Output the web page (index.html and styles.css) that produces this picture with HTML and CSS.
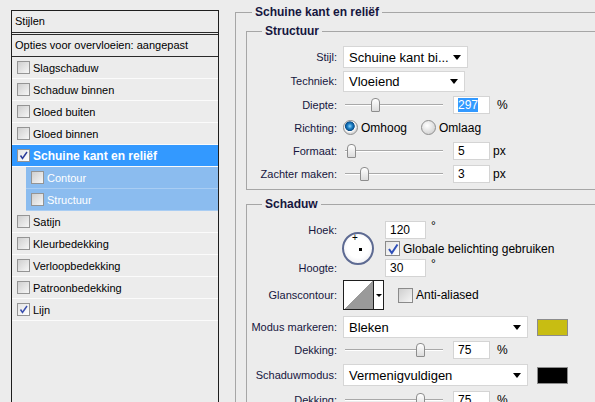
FILE: index.html
```html
<!DOCTYPE html>
<html lang="nl">
<head>
    <meta charset="UTF-8">
    <title>Laagstijl</title>
    <link rel="stylesheet" href="styles.css">
</head>
<body>
    <div class="dialog">
        <div class="styles-list">
            <div class="list-head">Stijlen</div>
            <div class="list-blend">Opties voor overvloeien: aangepast</div>
            <ul class="effects">
                <li><span class="check"></span>Slagschaduw</li>
                <li><span class="check"></span>Schaduw binnen</li>
                <li><span class="check"></span>Gloed buiten</li>
                <li><span class="check"></span>Gloed binnen</li>
                <li class="selected"><span class="check on"><svg width="9" height="9" viewBox="0 0 9 9"><path d="M1.5 4.5 L3.5 7.5 L8 1" stroke="#2b3c9a" stroke-width="1.5" fill="none"/></svg></span>Schuine kant en reliëf</li>
                <li class="sub"><span class="check"></span>Contour</li>
                <li class="sub"><span class="check"></span>Structuur</li>
                <li><span class="check"></span>Satijn</li>
                <li><span class="check"></span>Kleurbedekking</li>
                <li><span class="check"></span>Verloopbedekking</li>
                <li><span class="check"></span>Patroonbedekking</li>
                <li><span class="check on"><svg width="9" height="9" viewBox="0 0 9 9"><path d="M1.5 4.5 L3.5 7.5 L8 1" stroke="#3a4fae" stroke-width="1.5" fill="none"/></svg></span>Lijn</li>
            </ul>
        </div>

        <fieldset class="group outer">
            <legend>Schuine kant en reliëf</legend>

            <fieldset class="group inner structure">
                <legend>Structuur</legend>
                <div class="row tall">
                    <span class="label">Stijl:</span>
                    <div class="select stijl">Schuine kant bi...<span class="arrow"></span></div>
                </div>
                <div class="row tall">
                    <span class="label">Techniek:</span>
                    <div class="select techniek">Vloeiend<span class="arrow"></span></div>
                </div>
                <div class="row">
                    <span class="label">Diepte:</span>
                    <div class="controls">
                        <div class="slider"><span class="thumb" style="left: 31%"></span></div>
                        <div class="field"><span class="picked">297</span></div>
                        <span class="unit pct">%</span>
                    </div>
                </div>
                <div class="row">
                    <span class="label">Richting:</span>
                    <div class="controls">
                        <span class="radio on"></span><span class="radio-text">Omhoog</span>
                        <span class="radio"></span><span class="radio-text">Omlaag</span>
                    </div>
                </div>
                <div class="row">
                    <span class="label">Formaat:</span>
                    <div class="controls">
                        <div class="slider"><span class="thumb" style="left: 6%"></span></div>
                        <div class="field">5</div>
                        <span class="unit">px</span>
                    </div>
                </div>
                <div class="row">
                    <span class="label">Zachter maken:</span>
                    <div class="controls">
                        <div class="slider"><span class="thumb" style="left: 19%"></span></div>
                        <div class="field">3</div>
                        <span class="unit">px</span>
                    </div>
                </div>
            </fieldset>

            <fieldset class="group inner shadow">
                <legend>Schaduw</legend>
                <div class="angle">
                    <span class="label hoek">Hoek:</span>
                    <div class="dial"><span class="cross">+</span><span class="dot"></span></div>
                    <div class="controls hoek-field">
                        <div class="field wide">120</div><span class="deg">°</span>
                    </div>
                    <div class="controls global">
                        <span class="check big on"><svg width="12" height="12" viewBox="0 0 12 12"><path d="M2 6 L4.8 10 L10.5 1.5" stroke="#2f4fb8" stroke-width="2" fill="none"/></svg></span>
                        <span class="check-text">Globale belichting gebruiken</span>
                    </div>
                    <span class="label hoogte">Hoogte:</span>
                    <div class="controls hoogte-field">
                        <div class="field wide">30</div><span class="deg">°</span>
                    </div>
                </div>
                <div class="row gloss">
                    <span class="label">Glanscontour:</span>
                    <div class="controls">
                        <div class="contour"><span class="curve"></span><span class="curve-menu"><span class="arrow small"></span></span></div>
                        <span class="check big aa"></span><span class="check-text">Anti-aliased</span>
                    </div>
                </div>
                <div class="row mode">
                    <span class="label">Modus markeren:</span>
                    <div class="controls">
                        <div class="select blend">Bleken<span class="arrow"></span></div>
                        <span class="swatch yellow"></span>
                    </div>
                </div>
                <div class="row opacity">
                    <span class="label">Dekking:</span>
                    <div class="controls">
                        <div class="slider"><span class="thumb" style="left: 77%"></span></div>
                        <div class="field">75</div>
                        <span class="unit pct">%</span>
                    </div>
                </div>
                <div class="row mode second">
                    <span class="label">Schaduwmodus:</span>
                    <div class="controls">
                        <div class="select blend">Vermenigvuldigen<span class="arrow"></span></div>
                        <span class="swatch black"></span>
                    </div>
                </div>
                <div class="row opacity">
                    <span class="label">Dekking:</span>
                    <div class="controls">
                        <div class="slider"><span class="thumb" style="left: 77%"></span></div>
                        <div class="field">75</div>
                        <span class="unit pct">%</span>
                    </div>
                </div>
            </fieldset>
        </fieldset>
    </div>
</body>
</html>
```

FILE: styles.css
```css
body {
    margin: 0;
    background-color: #ececec;
    font-family: "Liberation Sans", Arial, sans-serif;
    font-size: 11px;
    color: #000;
    overflow: hidden;
}

.dialog {
    display: flex;
    align-items: flex-start;
    height: 402px;
}

/* left: list of effects */
.styles-list {
    flex: none;
    width: 206px;
    height: 400px;
    margin: 10px 0 0 11px;
    border: 1px solid #1e1e1e;
}

.list-head {
    height: 21px;
    line-height: 21px;
    padding-left: 3px;
    border-bottom: 3px double #2a2a2a;
}

.list-blend {
    height: 21px;
    line-height: 21px;
    padding-left: 3px;
    border-bottom: 1px solid #2a2a2a;
}

.effects {
    list-style: none;
    margin: 0;
    padding: 0;
}

.effects li {
    display: flex;
    align-items: center;
    height: 21px;
    border-bottom: 1px solid #fbfbfb;
}

.effects li.selected {
    background-color: #3399ff;
    color: #fff;
    font-weight: bold;
    font-size: 12px;
}

.effects li.sub {
    margin-left: 14px;
    background-color: #8bbcef;
    border-bottom-color: #a9cdf3;
    color: #fff;
}

.check {
    flex: none;
    display: flex;
    align-items: center;
    justify-content: center;
    width: 11px;
    height: 11px;
    margin: 0 3px 0 5px;
    border: 1px solid #949494;
    background: linear-gradient(135deg, #cfcfcf, #f6f6f6);
}

.check.on {
    background: linear-gradient(135deg, #e4e4e4, #ffffff);
}

.check.big {
    width: 13px;
    height: 13px;
    margin: 0 3px 0 0;
    border-color: #8a8a8a;
}

/* right: group boxes */
.group {
    margin: 0;
    padding: 0;
    border: 1px solid #a6a6a6;
    min-width: 0;
}

.group legend {
    padding: 0 3px;
    font-weight: bold;
    font-size: 12px;
    line-height: 14px;
    color: #16163e;
}

.outer {
    flex: none;
    width: 400px;
    margin: 5px 0 0 16px;
    padding: 0 0 0 10px;
}

.outer > legend {
    margin-left: 6px;
}

.inner > legend {
    margin-left: 15px;
}

.structure {
    margin-top: 5px;
    padding: 7px 0 4px;
}

.shadow {
    margin-top: 7px;
    padding: 9px 0 20px;
}

.row {
    display: grid;
    grid-template-columns: 90px auto;
    column-gap: 6px;
    align-items: center;
    height: 23px;
}

.row.tall {
    height: 24px;
}

.label {
    text-align: right;
    color: #16163e;
    white-space: nowrap;
}

.controls {
    display: flex;
    align-items: center;
}

.select {
    display: flex;
    align-items: center;
    justify-content: space-between;
    box-sizing: border-box;
    height: 22px;
    padding: 0 6px 0 5px;
    background-color: #fff;
    border: 1px solid #d6d6d6;
    font-size: 13px;
    white-space: nowrap;
}

.select.stijl {
    width: 125px;
}

.select.techniek {
    width: 122px;
    height: 21px;
}

.select.blend {
    width: 185px;
}

.arrow {
    width: 0;
    height: 0;
    border-left: 4px solid transparent;
    border-right: 4px solid transparent;
    border-top: 5px solid #000;
}

.arrow.small {
    border-left-width: 3px;
    border-right-width: 3px;
    border-top-width: 3px;
}

.slider {
    position: relative;
    flex: none;
    width: 98px;
    height: 0;
    margin: 0 10px 0 2px;
    border-top: 1px solid #a9a9a9;
    border-bottom: 1px solid #fff;
}

.thumb {
    position: absolute;
    top: -7px;
    width: 7px;
    height: 12px;
    margin-left: -4px;
    border: 1px solid #8d8d8d;
    border-radius: 4px 4px 1px 1px;
    background: linear-gradient(#ffffff, #dcdcdc);
}

.field {
    flex: none;
    box-sizing: border-box;
    width: 37px;
    height: 18px;
    padding-left: 4px;
    background-color: #fff;
    border: 1px solid #d4d4d4;
    font-size: 12px;
    line-height: 16px;
}

.field.wide {
    width: 41px;
}

.picked {
    background-color: #3399ff;
    color: #fff;
}

.unit {
    margin-left: 3px;
    font-size: 12px;
}

.unit.pct {
    margin-left: 7px;
}

.deg {
    align-self: flex-start;
    margin: -2px 0 0 5px;
    font-size: 12px;
}

.radio {
    flex: none;
    box-sizing: border-box;
    width: 15px;
    height: 15px;
    border-radius: 50%;
    border: 1px solid #8e8e8e;
    background: radial-gradient(circle at 40% 35%, #ffffff, #d2d2d2 80%);
}

.radio.on {
    background: radial-gradient(circle at 45% 40%, #8fd8ff 0, #1c7fc6 2.5px, #0a4d88 4.5px, #ffffff 5.2px, #d8d8d8 7px);
}

.radio-text {
    margin: 0 14px 0 3px;
    font-size: 12px;
}

/* angle block: dial plus two fields */
.angle {
    display: grid;
    grid-template-columns: 90px 38px auto;
    grid-template-rows: 19px 19px 19px;
    column-gap: 5px;
    align-items: center;
}

.hoek {
    grid-area: 1 / 1;
}

.hoek-field {
    grid-area: 1 / 3;
}

.global {
    grid-area: 2 / 3;
}

.hoogte {
    grid-area: 3 / 1;
}

.hoogte-field {
    grid-area: 3 / 3;
}

.dial {
    grid-row: 1 / 4;
    grid-column: 2;
    position: relative;
    box-sizing: border-box;
    width: 32px;
    height: 33px;
    border-radius: 50%;
    border: 2px solid #5d6a92;
    background: radial-gradient(circle at 50% 45%, #ffffff 50%, #e4e4ea);
}

.cross {
    position: absolute;
    left: 8px;
    top: -1px;
    font-size: 10px;
    line-height: 10px;
}

.dot {
    position: absolute;
    left: 15px;
    top: 14px;
    width: 3px;
    height: 3px;
    background-color: #000;
}

.check-text {
    font-size: 12px;
    white-space: nowrap;
}

.row.gloss {
    height: 36px;
}

.contour {
    display: flex;
    box-sizing: border-box;
    width: 41px;
    height: 30px;
    border: 1px solid #1e1e1e;
    background-color: #fff;
}

.curve {
    flex: 1;
    background: linear-gradient(to top left, #9a9a9a 50%, #ffffff 50%);
}

.curve-menu {
    display: flex;
    align-items: center;
    justify-content: center;
    width: 9px;
    border-left: 1px solid #1e1e1e;
}

.check.aa {
    margin-left: 14px;
}

.row.mode {
    height: 28px;
}

.row.mode.second {
    height: 32px;
}

.row.opacity {
    height: 18px;
}

.swatch {
    flex: none;
    box-sizing: border-box;
    width: 31px;
    height: 17px;
    margin-left: 9px;
    border: 1px solid #8c8c8c;
}

.swatch.yellow {
    background-color: #c8bd12;
}

.swatch.black {
    background-color: #000;
}
```
